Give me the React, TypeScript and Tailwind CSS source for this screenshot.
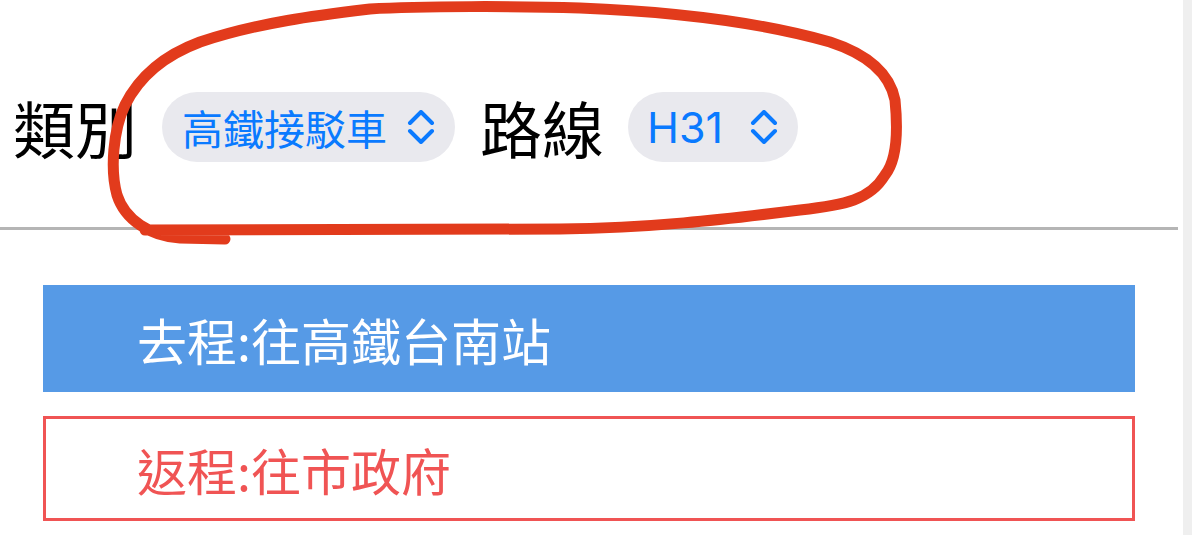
import React from "react";

const Chevron = () => (
  <svg width="28" height="34" viewBox="0 0 28 34" fill="none" stroke="#0a7aff" strokeWidth="4" strokeLinecap="round" strokeLinejoin="round">
    <path d="M3 13 L14 2 L25 13" />
    <path d="M3 21 L14 32 L25 21" />
  </svg>
);

export default function App() {
  const font = { fontFamily: '"Inter", "Noto Sans CJK TC", sans-serif' };
  const cjk = { fontFamily: '"Noto Sans CJK TC", sans-serif' };
  return (
    <div className="relative w-[1200px] h-[535px] overflow-hidden bg-white flex" style={font}>
      <div className="w-[1183px] flex flex-col">
        <div className="h-[227px] flex items-start pt-[92px] pl-[13px]">
          <div className="flex items-center h-[70px]">
            <span className="text-[62px] leading-none text-black" style={cjk}>類別</span>
            <div className="ml-[25px] h-[70px] rounded-full bg-[#e9e9ee] flex items-center pl-[20px] pr-[20px] gap-[20px]">
              <span className="text-[41px] leading-none text-[#0a7aff]" style={cjk}>高鐵接駁車</span>
              <Chevron />
            </div>
            <span className="ml-[25px] text-[62px] leading-none text-black" style={cjk}>路線</span>
            <div className="ml-[24px] h-[70px] rounded-full bg-[#e9e9ee] flex items-center pl-[19px] pr-[20px] gap-[27px]">
              <span className="text-[43px] leading-none text-[#0a7aff]">H31</span>
              <Chevron />
            </div>
          </div>
        </div>
        <div className="h-[3px] w-[1178px] bg-[#b5b5b5]" />
        <div className="flex flex-col gap-[24px] pl-[43px] pt-[55px]">
          <div className="w-[1092px] h-[107px] bg-[#569ae6] flex items-center pl-[94px]">
            <span className="text-[50px] leading-none text-white" style={cjk}>去程:往高鐵台南站</span>
          </div>
          <div className="w-[1092px] h-[105px] border-[3px] border-[#f05454] flex items-center pl-[91px]">
            <span className="text-[50px] leading-none text-[#f05454]" style={cjk}>返程:往市政府</span>
          </div>
        </div>
      </div>
      <div className="w-[9px] h-full bg-[#efefef]" />
      <div className="flex-1" />
      <svg className="absolute inset-0 pointer-events-none" width="1200" height="535" viewBox="0 0 1200 535" fill="none">
        <path
          d="M225 239 L180 238 C150 236 125 220 117 195 C110 170 113 130 125 105 C140 75 165 55 200 42 C260 22 320 15 370 9 C420 6 520 6 580 8 C680 12 760 22 830 42 C870 55 890 75 895 100 C898 130 897 160 885 175 C870 200 845 205 800 210 C720 220 650 228 560 229 L145 230"
          stroke="#e23b1c"
          strokeWidth="11"
          strokeLinecap="round"
          strokeLinejoin="round"
        />
      </svg>
    </div>
  );
}
